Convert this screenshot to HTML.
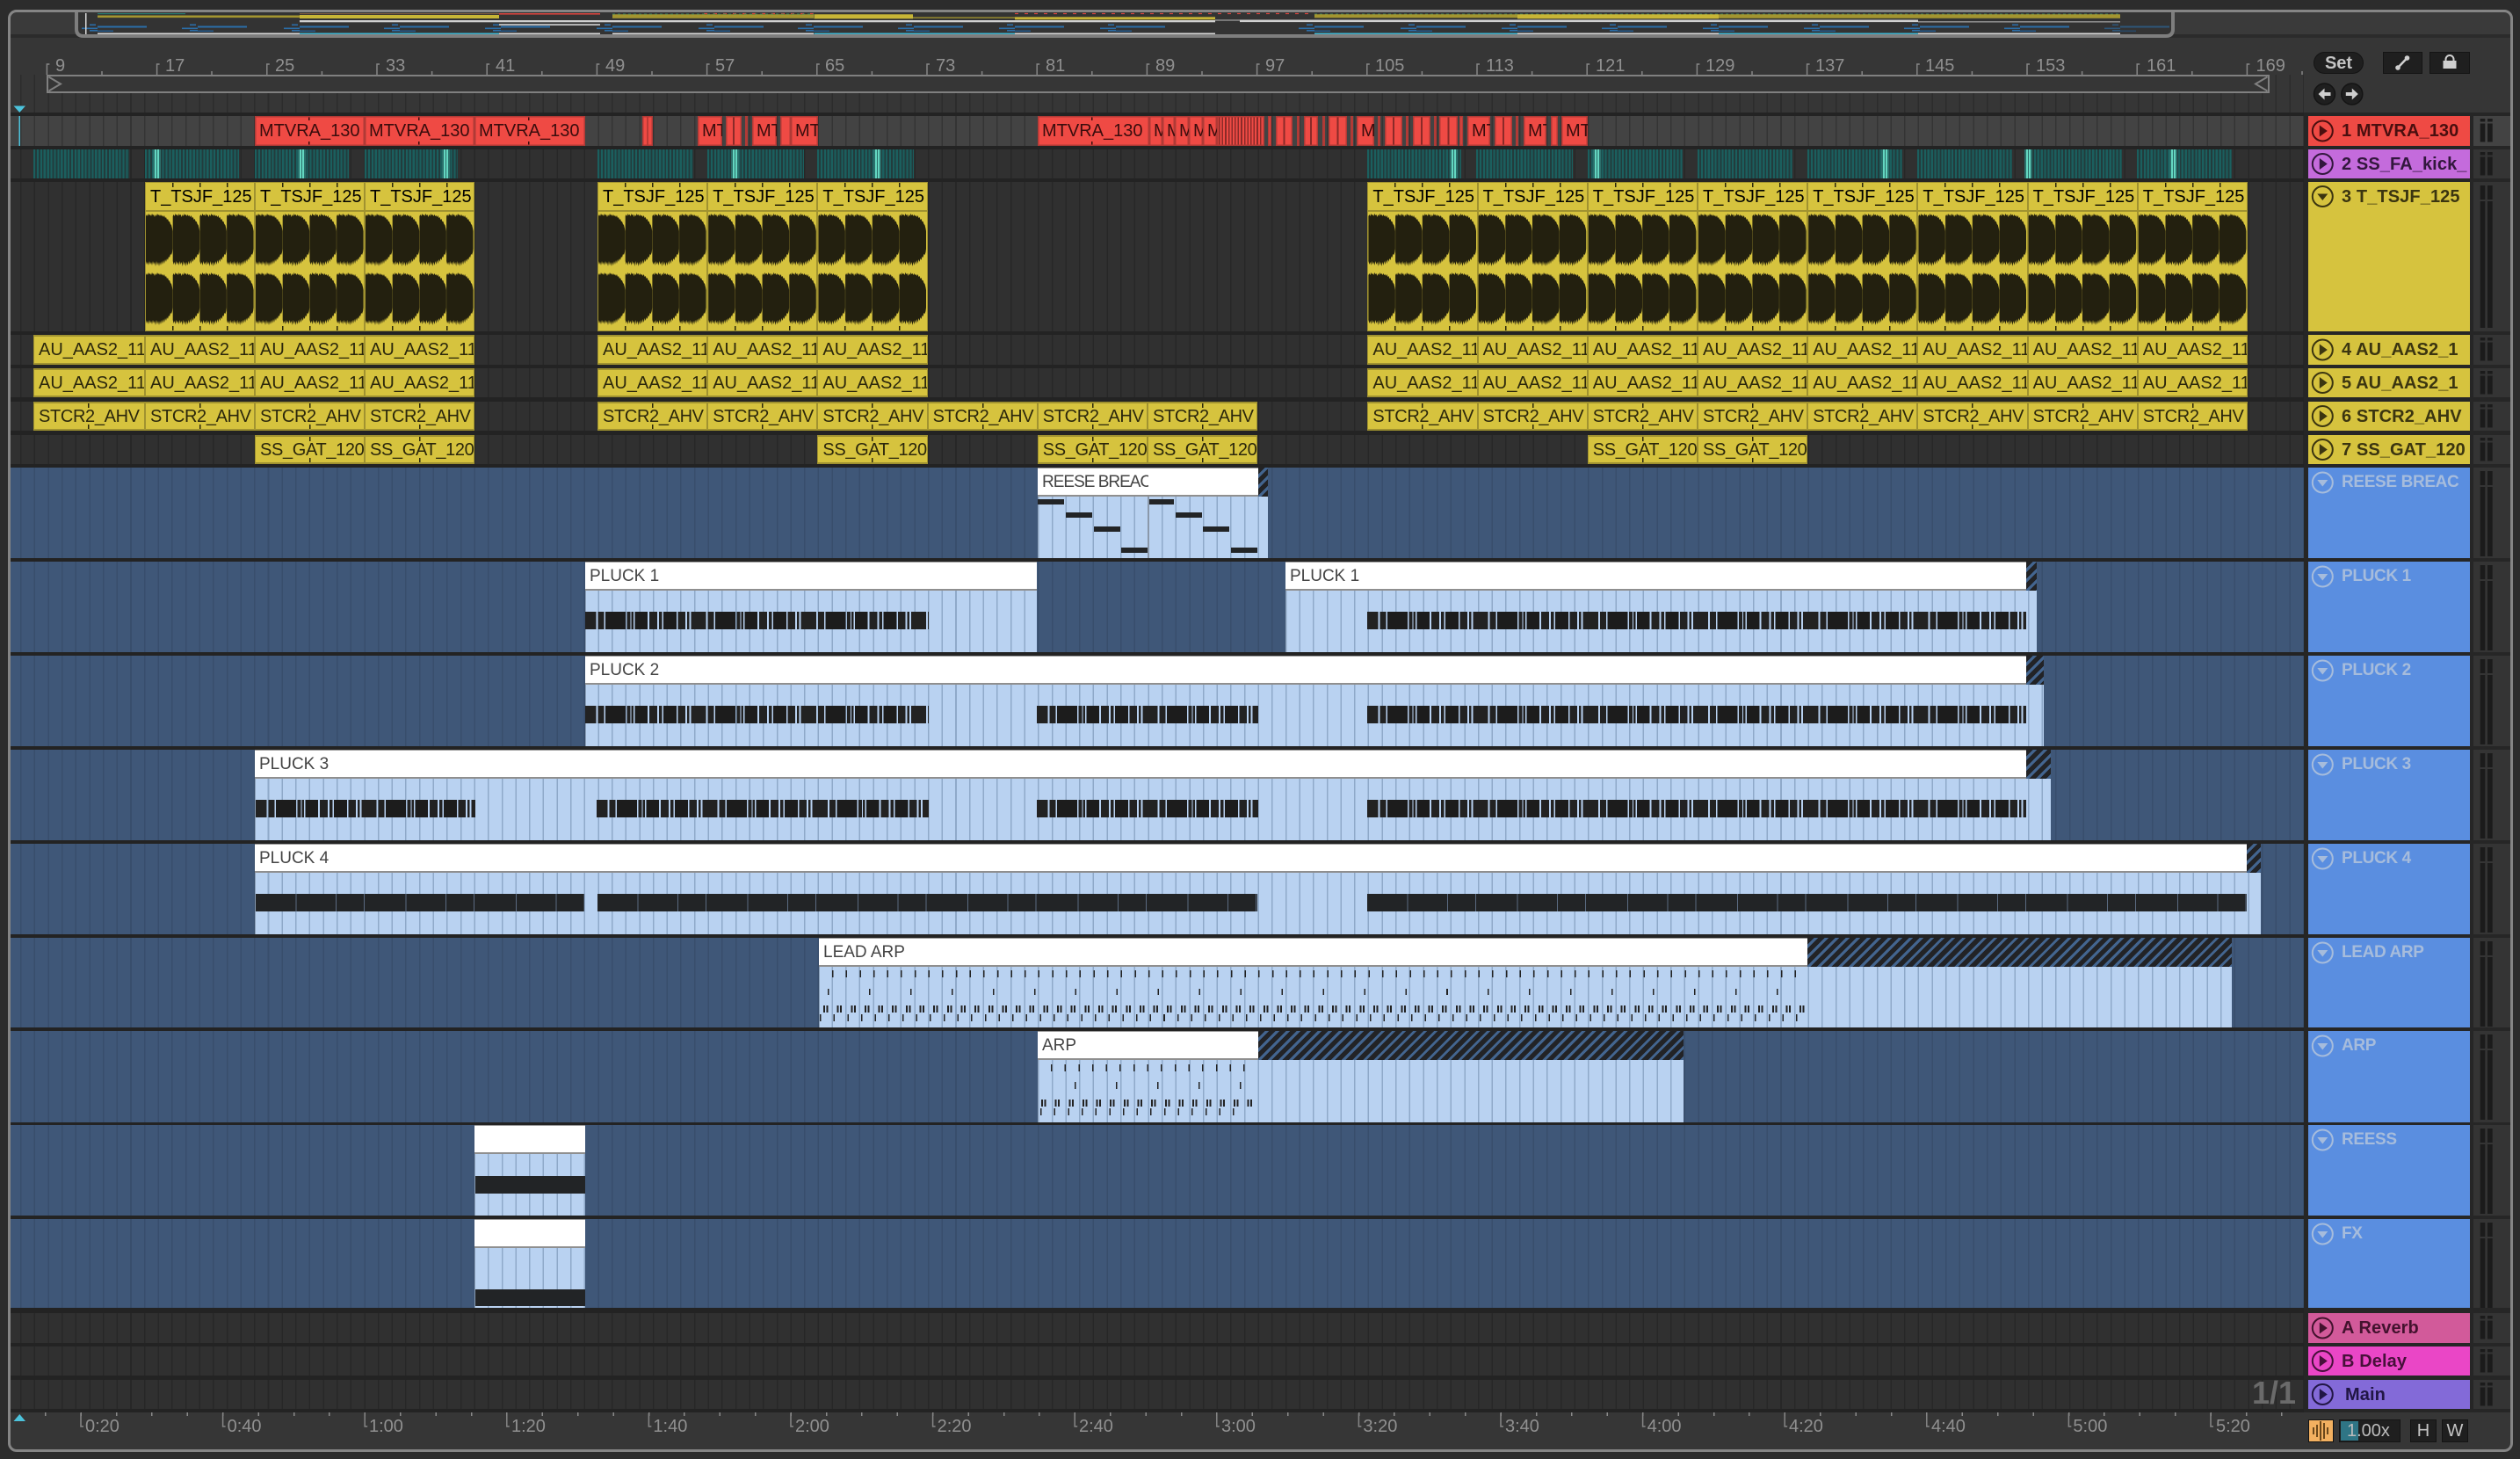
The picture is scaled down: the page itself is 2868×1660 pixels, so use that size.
<!DOCTYPE html>
<html><head><meta charset="utf-8"><title>Arrangement</title>
<style>
html,body{margin:0;padding:0;width:2868px;height:1660px;overflow:hidden;background:#2c2c2c;font-family:"Liberation Sans",sans-serif}
div,i{position:absolute;display:block;font-style:normal;white-space:nowrap;box-sizing:border-box}
.r{left:0;width:2622px;overflow:hidden;background:repeating-linear-gradient(90deg,#272727 7.4px 8.9px,#303030 8.9px 23.05px) fixed}
.r1{background:repeating-linear-gradient(90deg,#343434 7.4px 8.9px,#434343 8.9px 23.05px) fixed}
.B{background:repeating-linear-gradient(90deg,#384e6c 7.4px 8.9px,#3f5778 8.9px 23.05px) fixed}
.r i{top:0;height:100%;overflow:hidden;font-size:20px;line-height:31px;padding-left:5px}
.Y i{background:#d6c33e;border:2px solid #a09230;border-width:2px 1px;color:#2b270c}
.Y.t i{background:linear-gradient(#2b270c,#2b270c) 61px 0/1.5px 5px no-repeat,linear-gradient(#2b270c,#2b270c) 61px 100%/1.5px 5px no-repeat,#d6c33e;letter-spacing:-.35px}
.W i{background:linear-gradient(#2b270c,#2b270c) 30px 0/1.5px 5px no-repeat,linear-gradient(#2b270c,#2b270c) 61px 0/1.5px 5px no-repeat,linear-gradient(#2b270c,#2b270c) 92px 0/1.5px 5px no-repeat,linear-gradient(#2b270c,#2b270c) 30px 100%/1.5px 5px no-repeat,linear-gradient(#2b270c,#2b270c) 61px 100%/1.5px 5px no-repeat,linear-gradient(#2b270c,#2b270c) 92px 100%/1.5px 5px no-repeat,linear-gradient(#a09230,#a09230) 0 31px/100% 2px no-repeat,#d6c33e;border:1px solid #a09230;line-height:32px}
.R i{background:#ef4a44;box-shadow:inset 0 0 0 1.5px #b03a36;color:#3a0d0d;line-height:34px}
.R i.M{background:linear-gradient(#3a0d0d,#3a0d0d) 61px 0/1.5px 5px no-repeat,linear-gradient(#3a0d0d,#3a0d0d) 61px 100%/1.5px 5px no-repeat,#ef4a44}
.R i.l{background:linear-gradient(90deg,#ef4a44 0 45%,#8a2a28 45% 55%,#ef4a44 55%)}
.R i.dn{background:repeating-linear-gradient(90deg,#ef4a44 0 2px,#8a2a28 2px 3.6px)}
.T i{background:repeating-linear-gradient(90deg,#1b5f5e 0 2.2px,#223c3d 2.2px 3.9px);padding:0}
.T i.h{background:linear-gradient(90deg,#2b6f6b 0 2px,#63d6c0 2px 4px,#2b6f6b 4px 5px,#63d6c0 5px 7px,#2b6f6b 7px)}
.w{top:0;height:33px;background:#fff;border-top:1.5px solid #9a9a9a;border-bottom:2px solid #8f8f8f;font-size:19px;color:#444;padding-left:5px;line-height:31px;overflow:hidden}
.b{top:33px;bottom:0;border-left:1.5px solid #8a9fb8;background:repeating-linear-gradient(90deg,#8fa9c9 7.4px 8.9px,#b9d2f1 8.9px 23.05px) fixed}
.x{top:0;height:33px;background:repeating-linear-gradient(135deg,#222326 0 5.5px,#43658f 5.5px 8.5px)}
.n{background:#222426}
.d{top:57px;height:20px;background:repeating-linear-gradient(90deg,#222 0 12.5px,transparent 12.5px 14.5px,#222 14.5px 21.5px,transparent 21.5px 23px,#1c1c1c 23px 46px,transparent 46px 47.5px,#222 47.5px 51.5px,transparent 51.5px 52.5px,#222 52.5px 55px,transparent 55px 56.5px,#1c1c1c 56.5px 71px,transparent 71px 73px,#222 73px 82px,transparent 82px 84px,#222 84px 87.5px,transparent 87.5px 89px,#1c1c1c 89px 104px,transparent 104px 105.5px,#222 105.5px 114px,transparent 114px 116px,#222 116px 118.5px,transparent 118.5px 120.5px,#222 120.5px 125.2px)}
.e{top:57px;height:20px;background:repeating-linear-gradient(90deg,#222426 0 45.5px,#5a6a80 45.5px 46.5px,#222426 46.5px 91px,#5a6a80 91px 92px,#222426 92px 123px,#5a6a80 123px 124px,#222426 124px 125.2px)}
.l1{background:repeating-linear-gradient(90deg,#222 0 1.5px,transparent 1.5px 15.65px)}
.l2{background:repeating-linear-gradient(90deg,#222 0 1.5px,transparent 1.5px 46.95px)}
.l3{background:repeating-linear-gradient(90deg,#222 0 2px,transparent 2px 3.5px,#222 3.5px 5.5px,transparent 5.5px 15.65px)}
.h{left:2627px;width:184px;font-weight:bold;font-size:20px;line-height:34px;padding-left:38px;letter-spacing:.1px;overflow:hidden}
.f{background:#5a8ee0;color:#a6bcdc;font-size:19px;letter-spacing:-.35px}
.m{left:2815px;width:42px;background:#343434}
.btn{background:#1f1f1f;border:1.5px solid #141414;color:#c4c4c4;font-size:20px;text-align:center;line-height:24px}
svg text{font-family:"Liberation Sans",sans-serif;font-size:20px;fill:#909090}
</style></head><body>
<div style="left:9px;top:11px;width:2851px;height:1641px;background:#363636;border-radius:10px"></div>
<div style="left:12px;top:14px;width:2845px;height:25px;background:#3a3a3a"></div>
<div style="left:88px;top:14px;width:2384px;height:25px;background:#333"></div>
<div style="left:12px;top:39px;width:2845px;height:4px;background:#2b2b2b"></div>
<div style="left:0;top:85px;width:2622px;height:43px;background:repeating-linear-gradient(90deg,#2c2c2c 7.4px 8.9px,#363636 8.9px 23.05px) fixed"></div>
<div style="left:53px;top:85px;width:2530px;height:21px;background:#363636;border:2.5px solid #808080"></div>
<div style="left:0;top:128px;width:2626px;height:1479px;background:#232323"></div>
<div style="left:2622px;top:128px;width:235px;height:1479px;background:#262626"></div>

<div class="r r1 R" style="top:132px;height:34px">
<i class="M" style="left:290px;width:125px">MTVRA_130</i><i class="M" style="left:415px;width:125px">MTVRA_130</i><i class="M" style="left:540px;width:126px">MTVRA_130</i>
<i class="l" style="left:731px;width:12px"></i><i style="left:794px;width:28px">MT</i><i class="l" style="left:826px;width:18px"></i><i style="left:848px;width:3px;padding:0"></i><i style="left:856px;width:28px">MT</i><i style="left:888px;width:12px;padding:0"></i><i style="left:900px;width:31px">MT</i>
<i class="M" style="left:1181px;width:127px">MTVRA_130</i><i style="left:1308px;width:15px">M</i><i style="left:1323px;width:14px">M</i><i style="left:1337px;width:16px">M</i><i style="left:1353px;width:16px">M</i><i style="left:1369px;width:16px">M</i>
<i class="dn" style="left:1385px;width:54px;padding:0"></i><i style="left:1443px;width:4px;padding:0"></i><i class="l" style="left:1452px;width:19px;padding:0"></i><i style="left:1476px;width:3px;padding:0"></i><i class="l" style="left:1484px;width:16px;padding:0"></i><i style="left:1505px;width:3px;padding:0"></i><i class="l" style="left:1512px;width:21px;padding:0"></i><i style="left:1537px;width:3px;padding:0"></i><i style="left:1544px;width:20px">M</i><i style="left:1568px;width:3px;padding:0"></i><i class="l" style="left:1576px;width:20px;padding:0"></i><i style="left:1600px;width:3px;padding:0"></i><i class="l" style="left:1608px;width:20px;padding:0"></i><i style="left:1632px;width:3px;padding:0"></i><i class="l" style="left:1638px;width:21px;padding:0"></i><i style="left:1661px;width:4px;padding:0"></i><i style="left:1670px;width:26px">MT</i><i class="l" style="left:1701px;width:20px;padding:0"></i><i style="left:1725px;width:3px;padding:0"></i><i style="left:1734px;width:26px">MT</i><i style="left:1765px;width:8px;padding:0"></i><i style="left:1777px;width:30px">MT</i>
</div>

<div class="r T" style="top:170px;height:33px">
<i style="left:38px;width:109px"></i><i style="left:165px;width:107px"></i><i style="left:290px;width:107px"></i><i style="left:415px;width:106px"></i><i style="left:680px;width:109px"></i><i style="left:805px;width:110px"></i><i style="left:930px;width:110px"></i><i style="left:1556px;width:107px"></i><i style="left:1680px;width:110px"></i><i style="left:1807px;width:108px"></i><i style="left:1932px;width:108px"></i><i style="left:2057px;width:108px"></i><i style="left:2182px;width:108px"></i><i style="left:2307px;width:108px"></i><i style="left:2432px;width:108px"></i>
<i class="h" style="left:174px;width:9px"></i><i class="h" style="left:339px;width:9px"></i><i class="h" style="left:503px;width:9px"></i><i class="h" style="left:832px;width:9px"></i><i class="h" style="left:994px;width:9px"></i><i class="h" style="left:1650px;width:9px"></i><i class="h" style="left:1813px;width:9px"></i><i class="h" style="left:2141px;width:9px"></i><i class="h" style="left:2304px;width:9px"></i><i class="h" style="left:2469px;width:9px"></i>
</div>

<div class="r W" style="top:207px;height:170px">
<i style="left:165px;width:125px">T_TSJF_125</i><i style="left:290px;width:125px">T_TSJF_125</i><i style="left:415px;width:125px">T_TSJF_125</i>
<i style="left:680px;width:125.2px">T_TSJF_125</i><i style="left:805.2px;width:125.2px">T_TSJF_125</i><i style="left:930.4px;width:125.2px">T_TSJF_125</i>
<i style="left:1556.4px;width:125.2px">T_TSJF_125</i><i style="left:1681.6px;width:125.2px">T_TSJF_125</i><i style="left:1806.8px;width:125.2px">T_TSJF_125</i><i style="left:1932px;width:125.2px">T_TSJF_125</i><i style="left:2057.2px;width:125.2px">T_TSJF_125</i><i style="left:2182.4px;width:125.2px">T_TSJF_125</i><i style="left:2307.6px;width:125.2px">T_TSJF_125</i><i style="left:2432.8px;width:125.2px">T_TSJF_125</i>
</div>

<div class="r Y" style="top:381px;height:34px">
<i style="left:38px;width:127px">AU_AAS2_11</i><i style="left:165px;width:125px">AU_AAS2_11</i><i style="left:290px;width:125px">AU_AAS2_11</i><i style="left:415px;width:125px">AU_AAS2_11</i>
<i style="left:680px;width:125.2px">AU_AAS2_11</i><i style="left:805.2px;width:125.2px">AU_AAS2_11</i><i style="left:930.4px;width:125.2px">AU_AAS2_11</i>
<i style="left:1556.4px;width:125.2px">AU_AAS2_11</i><i style="left:1681.6px;width:125.2px">AU_AAS2_11</i><i style="left:1806.8px;width:125.2px">AU_AAS2_11</i><i style="left:1932px;width:125.2px">AU_AAS2_11</i><i style="left:2057.2px;width:125.2px">AU_AAS2_11</i><i style="left:2182.4px;width:125.2px">AU_AAS2_11</i><i style="left:2307.6px;width:125.2px">AU_AAS2_11</i><i style="left:2432.8px;width:125.2px">AU_AAS2_11</i>
</div>
<div class="r Y" style="top:419px;height:33px">
<i style="left:38px;width:127px">AU_AAS2_11</i><i style="left:165px;width:125px">AU_AAS2_11</i><i style="left:290px;width:125px">AU_AAS2_11</i><i style="left:415px;width:125px">AU_AAS2_11</i>
<i style="left:680px;width:125.2px">AU_AAS2_11</i><i style="left:805.2px;width:125.2px">AU_AAS2_11</i><i style="left:930.4px;width:125.2px">AU_AAS2_11</i>
<i style="left:1556.4px;width:125.2px">AU_AAS2_11</i><i style="left:1681.6px;width:125.2px">AU_AAS2_11</i><i style="left:1806.8px;width:125.2px">AU_AAS2_11</i><i style="left:1932px;width:125.2px">AU_AAS2_11</i><i style="left:2057.2px;width:125.2px">AU_AAS2_11</i><i style="left:2182.4px;width:125.2px">AU_AAS2_11</i><i style="left:2307.6px;width:125.2px">AU_AAS2_11</i><i style="left:2432.8px;width:125.2px">AU_AAS2_11</i>
</div>
<div class="r Y t" style="top:457px;height:33px">
<i style="left:38px;width:127px">STCR2_AHV</i><i style="left:165px;width:125px">STCR2_AHV</i><i style="left:290px;width:125px">STCR2_AHV</i><i style="left:415px;width:125px">STCR2_AHV</i>
<i style="left:680px;width:125.2px">STCR2_AHV</i><i style="left:805.2px;width:125.2px">STCR2_AHV</i><i style="left:930.4px;width:125.2px">STCR2_AHV</i><i style="left:1055.6px;width:125.2px">STCR2_AHV</i><i style="left:1180.8px;width:125.2px">STCR2_AHV</i><i style="left:1306px;width:125.2px">STCR2_AHV</i>
<i style="left:1556.4px;width:125.2px">STCR2_AHV</i><i style="left:1681.6px;width:125.2px">STCR2_AHV</i><i style="left:1806.8px;width:125.2px">STCR2_AHV</i><i style="left:1932px;width:125.2px">STCR2_AHV</i><i style="left:2057.2px;width:125.2px">STCR2_AHV</i><i style="left:2182.4px;width:125.2px">STCR2_AHV</i><i style="left:2307.6px;width:125.2px">STCR2_AHV</i><i style="left:2432.8px;width:125.2px">STCR2_AHV</i>
</div>
<div class="r Y t" style="top:495px;height:33px">
<i style="left:290px;width:125px">SS_GAT_120</i><i style="left:415px;width:125px">SS_GAT_120</i><i style="left:930.4px;width:125.2px">SS_GAT_120</i><i style="left:1180.8px;width:125.2px">SS_GAT_120</i><i style="left:1306px;width:125.2px">SS_GAT_120</i><i style="left:1806.8px;width:125.2px">SS_GAT_120</i><i style="left:1932px;width:125.2px">SS_GAT_120</i>
</div>

<!-- REESE -->
<div class="r B" style="top:532px;height:103px">
<div class="b" style="left:1181px;width:262px"></div>
<div class="w" style="left:1181px;width:126px;letter-spacing:-1px">REESE BREAC</div><div class="w" style="left:1306.5px;width:125.5px"></div><div class="x" style="left:1432px;width:11px"></div>
<div style="left:1306px;top:33px;bottom:0;width:1.5px;background:#8a98aa"></div>
<div class="n" style="left:1181px;top:36px;width:30px;height:6px"></div><div class="n" style="left:1213px;top:51px;width:30px;height:6px"></div><div class="n" style="left:1245px;top:67px;width:30px;height:6px"></div><div class="n" style="left:1276px;top:91px;width:30px;height:6px"></div>
<div class="n" style="left:1308px;top:36px;width:28px;height:6px"></div><div class="n" style="left:1338px;top:51px;width:30px;height:6px"></div><div class="n" style="left:1369px;top:67px;width:30px;height:6px"></div><div class="n" style="left:1401px;top:91px;width:30px;height:6px"></div>
</div>
<!-- PLUCK 1 -->
<div class="r B" style="top:639px;height:103px">
<div class="b" style="left:666px;width:514px"></div><div class="w" style="left:666px;width:514px">PLUCK 1</div><div class="d" style="left:666px;width:391px"></div>
<div class="b" style="left:1463px;width:855px"></div><div class="w" style="left:1463px;width:843px">PLUCK 1</div><div class="x" style="left:2306px;width:12px"></div><div class="d" style="left:1556px;width:750px"></div>
</div>
<!-- PLUCK 2 -->
<div class="r B" style="top:746px;height:103px">
<div class="b" style="left:666px;width:1660px"></div><div class="w" style="left:666px;width:1640px">PLUCK 2</div><div class="x" style="left:2306px;width:20px"></div>
<div class="d" style="left:666px;width:391px"></div><div class="d" style="left:1180px;width:252px"></div><div class="d" style="left:1556px;width:750px"></div>
</div>
<!-- PLUCK 3 -->
<div class="r B" style="top:853px;height:103px">
<div class="b" style="left:290px;width:2044px"></div><div class="w" style="left:290px;width:2016px">PLUCK 3</div><div class="x" style="left:2306px;width:28px"></div>
<div class="d" style="left:291px;width:250px"></div><div class="d" style="left:679px;width:378px"></div><div class="d" style="left:1180px;width:252px"></div><div class="d" style="left:1556px;width:750px"></div>
</div>
<!-- PLUCK 4 -->
<div class="r B" style="top:960px;height:103px">
<div class="b" style="left:290px;width:2283px"></div><div class="w" style="left:290px;width:2267px">PLUCK 4</div><div class="x" style="left:2557px;width:16px"></div>
<div class="e" style="left:291px;width:374px"></div><div class="e" style="left:680px;width:751px"></div><div class="e" style="left:1556px;width:1001px"></div>
</div>
<!-- LEAD ARP -->
<div class="r B" style="top:1067px;height:102px">
<div class="b" style="left:932px;width:1608px"></div><div class="w" style="left:932px;width:1125px">LEAD ARP</div><div class="x" style="left:2057px;width:483px"></div>
<div class="l1" style="left:947px;top:37px;width:1110px;height:8px"></div><div class="l2" style="left:942px;top:58px;width:1115px;height:7px"></div><div class="l3" style="left:937px;top:77px;width:1120px;height:8px"></div><div class="l1" style="left:933px;top:87px;width:1124px;height:8px"></div>
</div>
<!-- ARP -->
<div class="r B" style="top:1173px;height:104px">
<div class="b" style="left:1181px;width:735px"></div><div class="w" style="left:1181px;width:251px">ARP</div><div class="x" style="left:1432px;width:484px"></div>
<div class="l1" style="left:1196px;top:38px;width:224px;height:8px"></div><div class="l2" style="left:1223px;top:58px;width:190px;height:8px"></div><div class="l3" style="left:1185px;top:78px;width:240px;height:8px"></div><div class="l1" style="left:1184px;top:88px;width:235px;height:8px"></div>
</div>
<!-- REESS -->
<div class="r B" style="top:1280px;height:103px">
<div class="b" style="left:540px;width:126px"></div><div class="w" style="left:540px;width:126px"></div><div class="n" style="left:541px;top:58px;width:125px;height:20px"></div>
</div>
<!-- FX -->
<div class="r B" style="top:1387px;height:101px">
<div class="b" style="left:540px;width:126px"></div><div class="w" style="left:540px;width:126px"></div><div class="n" style="left:541px;top:80px;width:125px;height:19px"></div>
</div>
<div class="r" style="top:1494px;height:34px"></div>
<div class="r" style="top:1532px;height:33px"></div>
<div class="r" style="top:1570px;height:33px"></div>

<!-- track headers -->
<div class="h" style="top:132px;height:34px;background:#ef4a44;color:#4a0f0f">1 MTVRA_130</div>
<div class="h" style="top:170px;height:33px;background:#c46bdc;color:#32173d">2 SS_FA_kick_</div>
<div class="h" style="top:207px;height:170px;background:#d6c33e;color:#3b3510">3 T_TSJF_125</div>
<div class="h" style="top:381px;height:34px;background:#d6c33e;color:#3b3510">4 AU_AAS2_1</div>
<div class="h" style="top:419px;height:33px;background:#d6c33e;color:#3b3510">5 AU_AAS2_1</div>
<div class="h" style="top:457px;height:33px;background:#d6c33e;color:#3b3510">6 STCR2_AHV</div>
<div class="h" style="top:495px;height:33px;background:#d6c33e;color:#3b3510">7 SS_GAT_120</div>
<div class="h f" style="top:532px;height:103px">REESE BREAC</div>
<div class="h f" style="top:639px;height:103px">PLUCK 1</div>
<div class="h f" style="top:746px;height:103px">PLUCK 2</div>
<div class="h f" style="top:853px;height:103px">PLUCK 3</div>
<div class="h f" style="top:960px;height:103px">PLUCK 4</div>
<div class="h f" style="top:1067px;height:102px">LEAD ARP</div>
<div class="h f" style="top:1173px;height:104px">ARP</div>
<div class="h f" style="top:1280px;height:103px">REESS</div>
<div class="h f" style="top:1387px;height:101px">FX</div>
<div class="h" style="top:1494px;height:34px;background:#d25a9a;color:#43122e">A Reverb</div>
<div class="h" style="top:1532px;height:33px;background:#ea46c6;color:#47103a">B Delay</div>
<div class="h" style="top:1570px;height:33px;background:#836ad8;color:#211645;padding-left:42px">Main</div>

<!-- meter column cells -->
<div class="m" style="top:132px;height:34px;background:#434343"></div><div class="m" style="top:170px;height:33px"></div><div class="m" style="top:207px;height:170px"></div><div class="m" style="top:381px;height:34px"></div><div class="m" style="top:419px;height:33px"></div><div class="m" style="top:457px;height:33px"></div><div class="m" style="top:495px;height:33px"></div><div class="m" style="top:532px;height:103px"></div><div class="m" style="top:639px;height:103px"></div><div class="m" style="top:746px;height:103px"></div><div class="m" style="top:853px;height:103px"></div><div class="m" style="top:960px;height:103px"></div><div class="m" style="top:1067px;height:102px"></div><div class="m" style="top:1173px;height:104px"></div><div class="m" style="top:1280px;height:103px"></div><div class="m" style="top:1387px;height:101px"></div><div class="m" style="top:1494px;height:34px"></div><div class="m" style="top:1532px;height:33px"></div><div class="m" style="top:1570px;height:33px"></div>

<!-- bottom -->
<div style="left:12px;top:1607px;width:2845px;height:42px;background:#363636"></div>
<div style="left:51px;top:1607px;width:2570px;height:4px;background:repeating-linear-gradient(90deg,#8a8a8a 0 1.5px,transparent 1.5px 40.4px)"></div>
<div style="left:2563px;top:1565px;font-size:36px;font-weight:bold;color:#6a6a6a;line-height:40px">1/1</div>

<!-- controls -->
<div class="btn" style="left:2633px;top:59px;width:57px;height:25px;border-radius:13px;font-weight:bold">Set</div>
<div class="btn" style="left:2712px;top:59px;width:45px;height:25px"></div>
<div class="btn" style="left:2765px;top:59px;width:46px;height:25px"></div>
<div class="btn" style="left:2627px;top:1615px;width:29px;height:26px;background:#f2b060"></div>
<div class="btn" style="left:2662px;top:1615px;width:70px;height:26px"></div>
<div style="left:2664px;top:1617px;width:20px;height:22px;background:#2f7585"></div>
<div style="left:2671px;top:1615px;font-size:20px;line-height:26px;color:#bcbcbc">1.00x</div>
<div class="btn" style="left:2743px;top:1615px;width:30px;height:26px">H</div>
<div class="btn" style="left:2779px;top:1615px;width:30px;height:26px">W</div>

<svg width="2868" height="1660" viewBox="0 0 2868 1660" style="position:absolute;left:0;top:0">
<defs>
<path id="L" d="M0,3 1,1 2,3 3,0 4,2 5,1 6,3 7,0 8,2 9,1 10,4 11,1 12,3 13,0 14,2 15,1 16,3 17,1 18,3 19,2 20,4 21,2 22,5 23,4 24,7 25,6 26,9 27,9 28,12 29,13 30,17 30.5,20 L30.5,40 30,44 29,47 28,46 27,50 26,49 25,53 24,51 23,55 22,52 21,57 20,53 19,58 18,54 17,59 16,55 15,60 14,55 13,59 12,54 11,60 10,55 9,58 8,54 7,59 6,55 5,58 4,54 3,59 2,55 1,58 0,54Z"/>
<g id="W" fill="#23200f"><use href="#L" x="1" y="243"/><use href="#L" x="31.7" y="243"/><use href="#L" x="62.4" y="243"/><use href="#L" x="93.1" y="243"/><use href="#L" x="1" y="310"/><use href="#L" x="31.7" y="310"/><use href="#L" x="62.4" y="310"/><use href="#L" x="93.1" y="310"/></g>
<g id="P"><circle r="11.5" fill="none" stroke-width="2"/><path d="M-3.5,-6.5 L5.5,0 -3.5,6.5Z" stroke="none"/></g>
<g id="D"><circle r="11.5" fill="none" stroke-width="2"/><path d="M-6,-3 H6 L0,4.5Z" stroke="none"/></g>
<g id="ms" fill="#1b1b1b"><rect x="2822.7" y="3" width="5.6" height="3.5"/><rect x="2831" y="3" width="5.7" height="3.5"/><rect x="2822.7" y="8.5" width="5.6" height="21"/><rect x="2831" y="8.5" width="5.7" height="21"/></g>
<g id="mt" fill="#1b1b1b"><rect x="2822.7" y="4" width="5.6" height="16"/><rect x="2831" y="4" width="5.7" height="16"/><rect x="2822.7" y="22" width="5.6" height="79"/><rect x="2831" y="22" width="5.7" height="79"/></g>
<g id="ov"><rect x="18" y="29.5" width="56" height="2" fill="#2b6ea8"/><rect x="0" y="31.5" width="18" height="1.6" fill="#2b6ea8"/><rect x="9" y="27.5" width="7" height="1.6" fill="#2b6ea8"/><rect x="9" y="34" width="9" height="1.6" fill="#2b6ea8"/><rect x="18" y="34.5" width="18" height="1.6" fill="#24598a"/></g>
</defs>

<!-- waveforms -->
<use href="#W" x="165"/><use href="#W" x="290"/><use href="#W" x="415"/><use href="#W" x="680"/><use href="#W" x="805.2"/><use href="#W" x="930.4"/><use href="#W" x="1556.4"/><use href="#W" x="1681.6"/><use href="#W" x="1806.8"/><use href="#W" x="1932"/><use href="#W" x="2057.2"/><use href="#W" x="2182.4"/><use href="#W" x="2307.6"/><use href="#W" x="2432.8"/>

<!-- overview -->
<rect x="111" y="17.5" width="230" height="2.6" fill="#a39530"/><rect x="341" y="17" width="227" height="4" fill="#c7b536"/><rect x="568" y="15" width="115" height="1.6" fill="#d6453f"/>
<rect x="111" y="15" width="100" height="1.2" fill="#2a7a70"/><rect x="341" y="15" width="227" height="1.2" fill="#7a5a40"/>
<rect x="341" y="23" width="1042" height="2.3" fill="#d0d0d0"/><rect x="568" y="27.3" width="115" height="1.6" fill="#d8d8d8"/>
<rect x="697" y="16.3" width="229" height="4.5" fill="#a39530"/><rect x="926.5" y="16.3" width="112.5" height="5" fill="#c7b536"/><rect x="1039" y="19.3" width="116" height="1.7" fill="#8b8030"/><rect x="1155" y="19.3" width="228" height="3" fill="#c7b536"/>
<path d="M801 15.5H926M1155 15.5H1496" stroke="#d6453f" stroke-width="1.3" stroke-dasharray="4 7" fill="none"/>
<path d="M697 16H926M1496 16H2413" stroke="#3f7f5f" stroke-width="1" stroke-dasharray="3 3" fill="none"/>
<rect x="1496" y="16.3" width="231" height="4" fill="#a39530"/><rect x="1727" y="16.3" width="229" height="5" fill="#c7b536"/><rect x="1956" y="16.3" width="457" height="4.5" fill="#a39530"/>
<rect x="1383" y="22" width="28" height="2" fill="#777"/><rect x="1411" y="22.5" width="772" height="2.6" fill="#d0d0d0"/><rect x="2183" y="24" width="230" height="1.6" fill="#8a8a8a"/>
<use href="#ov" x="93"/><use href="#ov" x="207"/><use href="#ov" x="323"/><use href="#ov" x="437"/><use href="#ov" x="552"/><use href="#ov" x="679"/><use href="#ov" x="795"/><use href="#ov" x="908"/><use href="#ov" x="1022"/><use href="#ov" x="1137"/><use href="#ov" x="1252"/><use href="#ov" x="1478"/><use href="#ov" x="1594"/><use href="#ov" x="1709"/><use href="#ov" x="1823"/><use href="#ov" x="1938"/><use href="#ov" x="2053"/><use href="#ov" x="2167"/><use href="#ov" x="2281"/><use href="#ov" x="2395" opacity=".6"/>
<rect x="111" y="37.5" width="230" height="1.6" fill="#d8d8d8"/><rect x="341" y="37.5" width="227" height="1.6" fill="#3fb5d0"/><rect x="568" y="37.5" width="115" height="1.6" fill="#d8d8d8"/><rect x="697" y="37.5" width="229" height="1.6" fill="#d8d8d8"/><rect x="926.5" y="37.5" width="228.5" height="1.6" fill="#3fb5d0"/><rect x="1155" y="37.5" width="228" height="1.6" fill="#d8d8d8"/><rect x="1496" y="37.5" width="231" height="1.6" fill="#3fb5d0"/><rect x="1727" y="37.5" width="229" height="1.6" fill="#d8d8d8"/><rect x="1956" y="37.5" width="227" height="1.6" fill="#3fb5d0"/><rect x="2183" y="37.5" width="230" height="1.6" fill="#d8d8d8"/>
<rect x="97" y="15" width="1.5" height="24" fill="#d8d8d8"/>
<path d="M87 13V33Q87 41 95 41H2465Q2473 41 2473 33V13" fill="none" stroke="#7e7e7e" stroke-width="4"/>

<!-- loop brace markers -->
<path d="M55.5 87.5L69 95.5 55.5 103.5M2580.5 87.5L2567 95.5 2580.5 103.5" fill="none" stroke="#808080" stroke-width="2"/>

<!-- ruler -->
<path d="M53.4 85V73h3M178.6 85V73h3M303.8 85V73h3M429 85V73h3M554.2 85V73h3M679.4 85V73h3M804.6 85V73h3M929.8 85V73h3M1055 85V73h3M1180.2 85V73h3M1305.4 85V73h3M1430.6 85V73h3M1555.8 85V73h3M1681 85V73h3M1806.2 85V73h3M1931.4 85V73h3M2056.6 85V73h3M2181.8 85V73h3M2307 85V73h3M2432.2 85V73h3M2557.4 85V73h3M116 85V81M241 85V81M366.4 85V81M491.6 85V81M616.8 85V81M742 85V81M867.2 85V81M992.4 85V81M1117.6 85V81M1242.8 85V81M1368 85V81M1493.2 85V81M1618.4 85V81M1743.6 85V81M1868.8 85V81M1994 85V81M2119.2 85V81M2244.4 85V81M2369.6 85V81M2494.8 85V81M2620 85V81" fill="none" stroke="#858585" stroke-width="1.5"/>
<text x="63" y="81">9</text><text x="188" y="81">17</text><text x="313" y="81">25</text><text x="439" y="81">33</text><text x="564" y="81">41</text><text x="689" y="81">49</text><text x="814" y="81">57</text><text x="939" y="81">65</text><text x="1065" y="81">73</text><text x="1190" y="81">81</text><text x="1315" y="81">89</text><text x="1440" y="81">97</text><text x="1565" y="81">105</text><text x="1691" y="81">113</text><text x="1816" y="81">121</text><text x="1941" y="81">129</text><text x="2066" y="81">137</text><text x="2191" y="81">145</text><text x="2317" y="81">153</text><text x="2443" y="81">161</text><text x="2567.5" y="81">169</text>

<!-- bottom ruler -->
<path d="M92 1608V1623h3M253.6 1608V1623h3M415.2 1608V1623h3M576.8 1608V1623h3M738.4 1608V1623h3M900 1608V1623h3M1061.6 1608V1623h3M1223.2 1608V1623h3M1384.8 1608V1623h3M1546.4 1608V1623h3M1708 1608V1623h3M1869.6 1608V1623h3M2031.2 1608V1623h3M2192.8 1608V1623h3M2354.4 1608V1623h3M2516 1608V1623h3" fill="none" stroke="#858585" stroke-width="1.5"/>
<text x="97" y="1629">0:20</text><text x="258.6" y="1629">0:40</text><text x="420" y="1629">1:00</text><text x="582" y="1629">1:20</text><text x="743.4" y="1629">1:40</text><text x="905" y="1629">2:00</text><text x="1066.6" y="1629">2:20</text><text x="1228" y="1629">2:40</text><text x="1390" y="1629">3:00</text><text x="1551.4" y="1629">3:20</text><text x="1713" y="1629">3:40</text><text x="1874.6" y="1629">4:00</text><text x="2036" y="1629">4:20</text><text x="2198" y="1629">4:40</text><text x="2359.4" y="1629">5:00</text><text x="2522" y="1629">5:20</text>

<!-- playheads -->
<path d="M15.5 120.5H29L22.3 128Z" fill="#4cc3dc"/><rect x="21.5" y="132" width="1.5" height="34" fill="#4cc3dc"/>
<path d="M15.5 1617H29L22.3 1609Z" fill="#4cc3dc"/>

<!-- header icons -->
<use href="#P" x="2643.3" y="149" stroke="#4a0f0f" fill="#4a0f0f"/>
<use href="#P" x="2643.3" y="186.5" stroke="#32173d" fill="#32173d"/>
<use href="#D" x="2643.3" y="223.5" stroke="#3b3510" fill="#3b3510"/>
<use href="#P" x="2643.3" y="398" stroke="#3b3510" fill="#3b3510"/>
<use href="#P" x="2643.3" y="435.5" stroke="#3b3510" fill="#3b3510"/>
<use href="#P" x="2643.3" y="473.5" stroke="#3b3510" fill="#3b3510"/>
<use href="#P" x="2643.3" y="511.5" stroke="#3b3510" fill="#3b3510"/>
<use href="#D" x="2643.3" y="549" stroke="#a6bcdc" fill="#a6bcdc"/>
<use href="#D" x="2643.3" y="656" stroke="#a6bcdc" fill="#a6bcdc"/>
<use href="#D" x="2643.3" y="763" stroke="#a6bcdc" fill="#a6bcdc"/>
<use href="#D" x="2643.3" y="870" stroke="#a6bcdc" fill="#a6bcdc"/>
<use href="#D" x="2643.3" y="977" stroke="#a6bcdc" fill="#a6bcdc"/>
<use href="#D" x="2643.3" y="1084" stroke="#a6bcdc" fill="#a6bcdc"/>
<use href="#D" x="2643.3" y="1190" stroke="#a6bcdc" fill="#a6bcdc"/>
<use href="#D" x="2643.3" y="1297" stroke="#a6bcdc" fill="#a6bcdc"/>
<use href="#D" x="2643.3" y="1404" stroke="#a6bcdc" fill="#a6bcdc"/>
<use href="#P" x="2643.3" y="1511" stroke="#43122e" fill="#43122e"/>
<use href="#P" x="2643.3" y="1548.5" stroke="#47103a" fill="#47103a"/>
<use href="#P" x="2643.3" y="1586.5" stroke="#211645" fill="#211645"/>

<!-- meters -->
<use href="#ms" y="132"/><use href="#ms" y="170"/>
<g fill="#1b1b1b"><rect x="2822.7" y="211" width="5.6" height="16"/><rect x="2831" y="211" width="5.7" height="16"/><rect x="2822.7" y="229" width="5.6" height="144"/><rect x="2831" y="229" width="5.7" height="144"/></g>
<use href="#ms" y="381"/><use href="#ms" y="419"/><use href="#ms" y="457"/><use href="#ms" y="495"/>
<use href="#mt" y="532"/><use href="#mt" y="639"/><use href="#mt" y="746"/><use href="#mt" y="853"/><use href="#mt" y="960"/><use href="#mt" y="1067"/><use href="#mt" y="1173"/><use href="#mt" y="1280"/><use href="#mt" y="1387"/>
<use href="#ms" y="1494"/><use href="#ms" y="1532"/><use href="#ms" y="1570"/>

<!-- control icons -->
<path d="M2729 77L2739.5 66" stroke="#d0d0d0" stroke-width="2.5"/><circle cx="2729" cy="77" r="2.8" fill="#d0d0d0"/><circle cx="2739.5" cy="66" r="2.8" fill="#d0d0d0"/>
<path d="M2780.5 69H2795.5V78H2780.5Z" fill="#d0d0d0"/><path d="M2783.5 69V67.5A4.5 4.5 0 0 1 2792.5 67.5V69" fill="none" stroke="#d0d0d0" stroke-width="2"/>
<circle cx="2645.5" cy="107" r="12" fill="#1f1f1f" stroke="#141414" stroke-width="1.5"/><circle cx="2676.8" cy="107" r="12" fill="#1f1f1f" stroke="#141414" stroke-width="1.5"/>
<path d="M2638.5 107L2645.5 100.5V105H2652.5V109H2645.5V113.5Z" fill="#cfcfcf"/><path d="M2683.8 107L2676.8 100.5V105H2669.8V109H2676.8V113.5Z" fill="#cfcfcf"/>
<path d="M2633 1624v8M2637 1621v14M2641 1617v22M2645 1619v18M2649 1624v8" stroke="#4a2f0a" stroke-width="1.6"/>
</svg>

<!-- window frame on top -->
<div style="left:0;top:0;width:9px;height:1660px;background:#2c2c2c"></div>
<div style="left:9px;top:11px;width:2851px;height:1641px;border:3px solid #858585;border-radius:10px"></div>
</body></html>
